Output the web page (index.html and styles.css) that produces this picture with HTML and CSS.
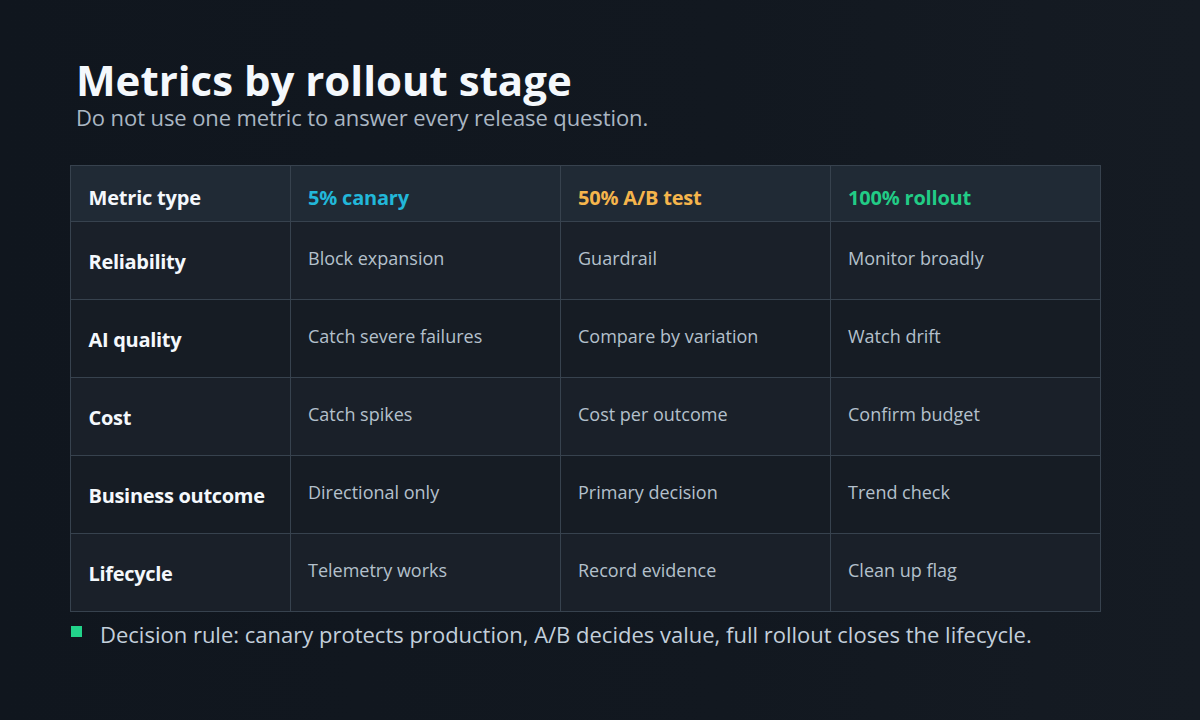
FILE: index.html
```html
<!DOCTYPE html>
<html lang="en">
<head>
<meta charset="utf-8">
<title>Metrics by rollout stage</title>
<link rel="stylesheet" href="styles.css">
</head>
<body>
<main class="slide">
  <header class="intro">
    <h1 class="title">Metrics by rollout stage</h1>
    <p class="subtitle">Do not use one metric to answer every release question.</p>
  </header>
  <table class="matrix">
    <colgroup>
      <col class="col-type">
      <col class="col-stage">
      <col class="col-stage">
      <col class="col-stage">
    </colgroup>
    <thead>
      <tr>
        <th class="head head-type">Metric type</th>
        <th class="head head-canary">5% canary</th>
        <th class="head head-ab">50% A/B test</th>
        <th class="head head-full">100% rollout</th>
      </tr>
    </thead>
    <tbody>
      <tr>
        <th class="label">Reliability</th>
        <td class="cell">Block expansion</td>
        <td class="cell">Guardrail</td>
        <td class="cell">Monitor broadly</td>
      </tr>
      <tr>
        <th class="label">AI quality</th>
        <td class="cell">Catch severe failures</td>
        <td class="cell">Compare by variation</td>
        <td class="cell">Watch drift</td>
      </tr>
      <tr>
        <th class="label">Cost</th>
        <td class="cell">Catch spikes</td>
        <td class="cell">Cost per outcome</td>
        <td class="cell">Confirm budget</td>
      </tr>
      <tr>
        <th class="label">Business outcome</th>
        <td class="cell">Directional only</td>
        <td class="cell">Primary decision</td>
        <td class="cell">Trend check</td>
      </tr>
      <tr>
        <th class="label">Lifecycle</th>
        <td class="cell">Telemetry works</td>
        <td class="cell">Record evidence</td>
        <td class="cell">Clean up flag</td>
      </tr>
    </tbody>
  </table>
  <p class="rule"><span class="rule-mark"></span><span class="rule-text">Decision rule: canary protects production, A/B decides value, full rollout closes the lifecycle.</span></p>
</main>
</body>
</html>
```

FILE: styles.css
```css
* {
  box-sizing: border-box;
}

html, body {
  margin: 0;
  padding: 0;
}

body {
  width: 1200px;
  height: 720px;
  overflow: hidden;
  background: linear-gradient(90deg, #10161e 0%, #121820 60%, #151b23 100%);
  font-family: "Open Sans", "Noto Sans", sans-serif;
  color: #e8eef5;
}

.slide {
  padding: 56px 100px 0 70px;
}

.intro {
  padding-left: 6px;
}

.title {
  margin: 0;
  font-size: 42px;
  line-height: 48px;
  font-weight: 700;
  letter-spacing: 0;
  color: #f4f8fc;
}

.subtitle {
  margin: 0;
  font-size: 22px;
  line-height: 26px;
  color: #aab6c3;
  letter-spacing: -0.1px;
}

.matrix {
  margin-top: 35px;
  width: 1031px;
  border-collapse: collapse;
  table-layout: fixed;
}

.col-type {
  width: 220px;
}

.col-stage {
  width: 270px;
}

.matrix th,
.matrix td {
  border: 1px solid #37424e;
  text-align: left;
  vertical-align: top;
  padding: 0 17px;
  line-height: 24px;
}

.matrix .head {
  height: 56px;
  background: #202a35;
  font-size: 20px;
  font-weight: 700;
  padding-top: 20px;
  letter-spacing: -0.2px;
}

.matrix .head-type {
  color: #f4f8fc;
  padding-left: 17.5px;
}

.head-canary {
  color: #22b7d9;
}

.head-ab {
  color: #f5b54c;
}

.head-full {
  color: #22cc86;
}

tbody tr {
  height: 78px;
}

tbody tr:nth-child(odd) {
  background: #1a2029;
}

tbody tr:nth-child(even) {
  background: #161c24;
}

.matrix .label {
  font-size: 20px;
  font-weight: 700;
  color: #f4f8fc;
  padding-left: 17.5px;
  padding-top: 28px;
  letter-spacing: -0.3px;
}

.matrix .cell {
  font-size: 18px;
  color: #b4c0cc;
  padding-top: 24px;
  letter-spacing: 0;
}

.rule {
  margin: 8px 0 0;
  display: flex;
  align-items: center;
  gap: 18px;
  padding-left: 1px;
}

.rule-mark {
  width: 11px;
  height: 11px;
  background: #22d38a;
  flex: none;
  margin-top: -5px;
}

.rule-text {
  font-size: 22px;
  line-height: 28px;
  color: #c3cfdb;
  letter-spacing: 0;
}
```
